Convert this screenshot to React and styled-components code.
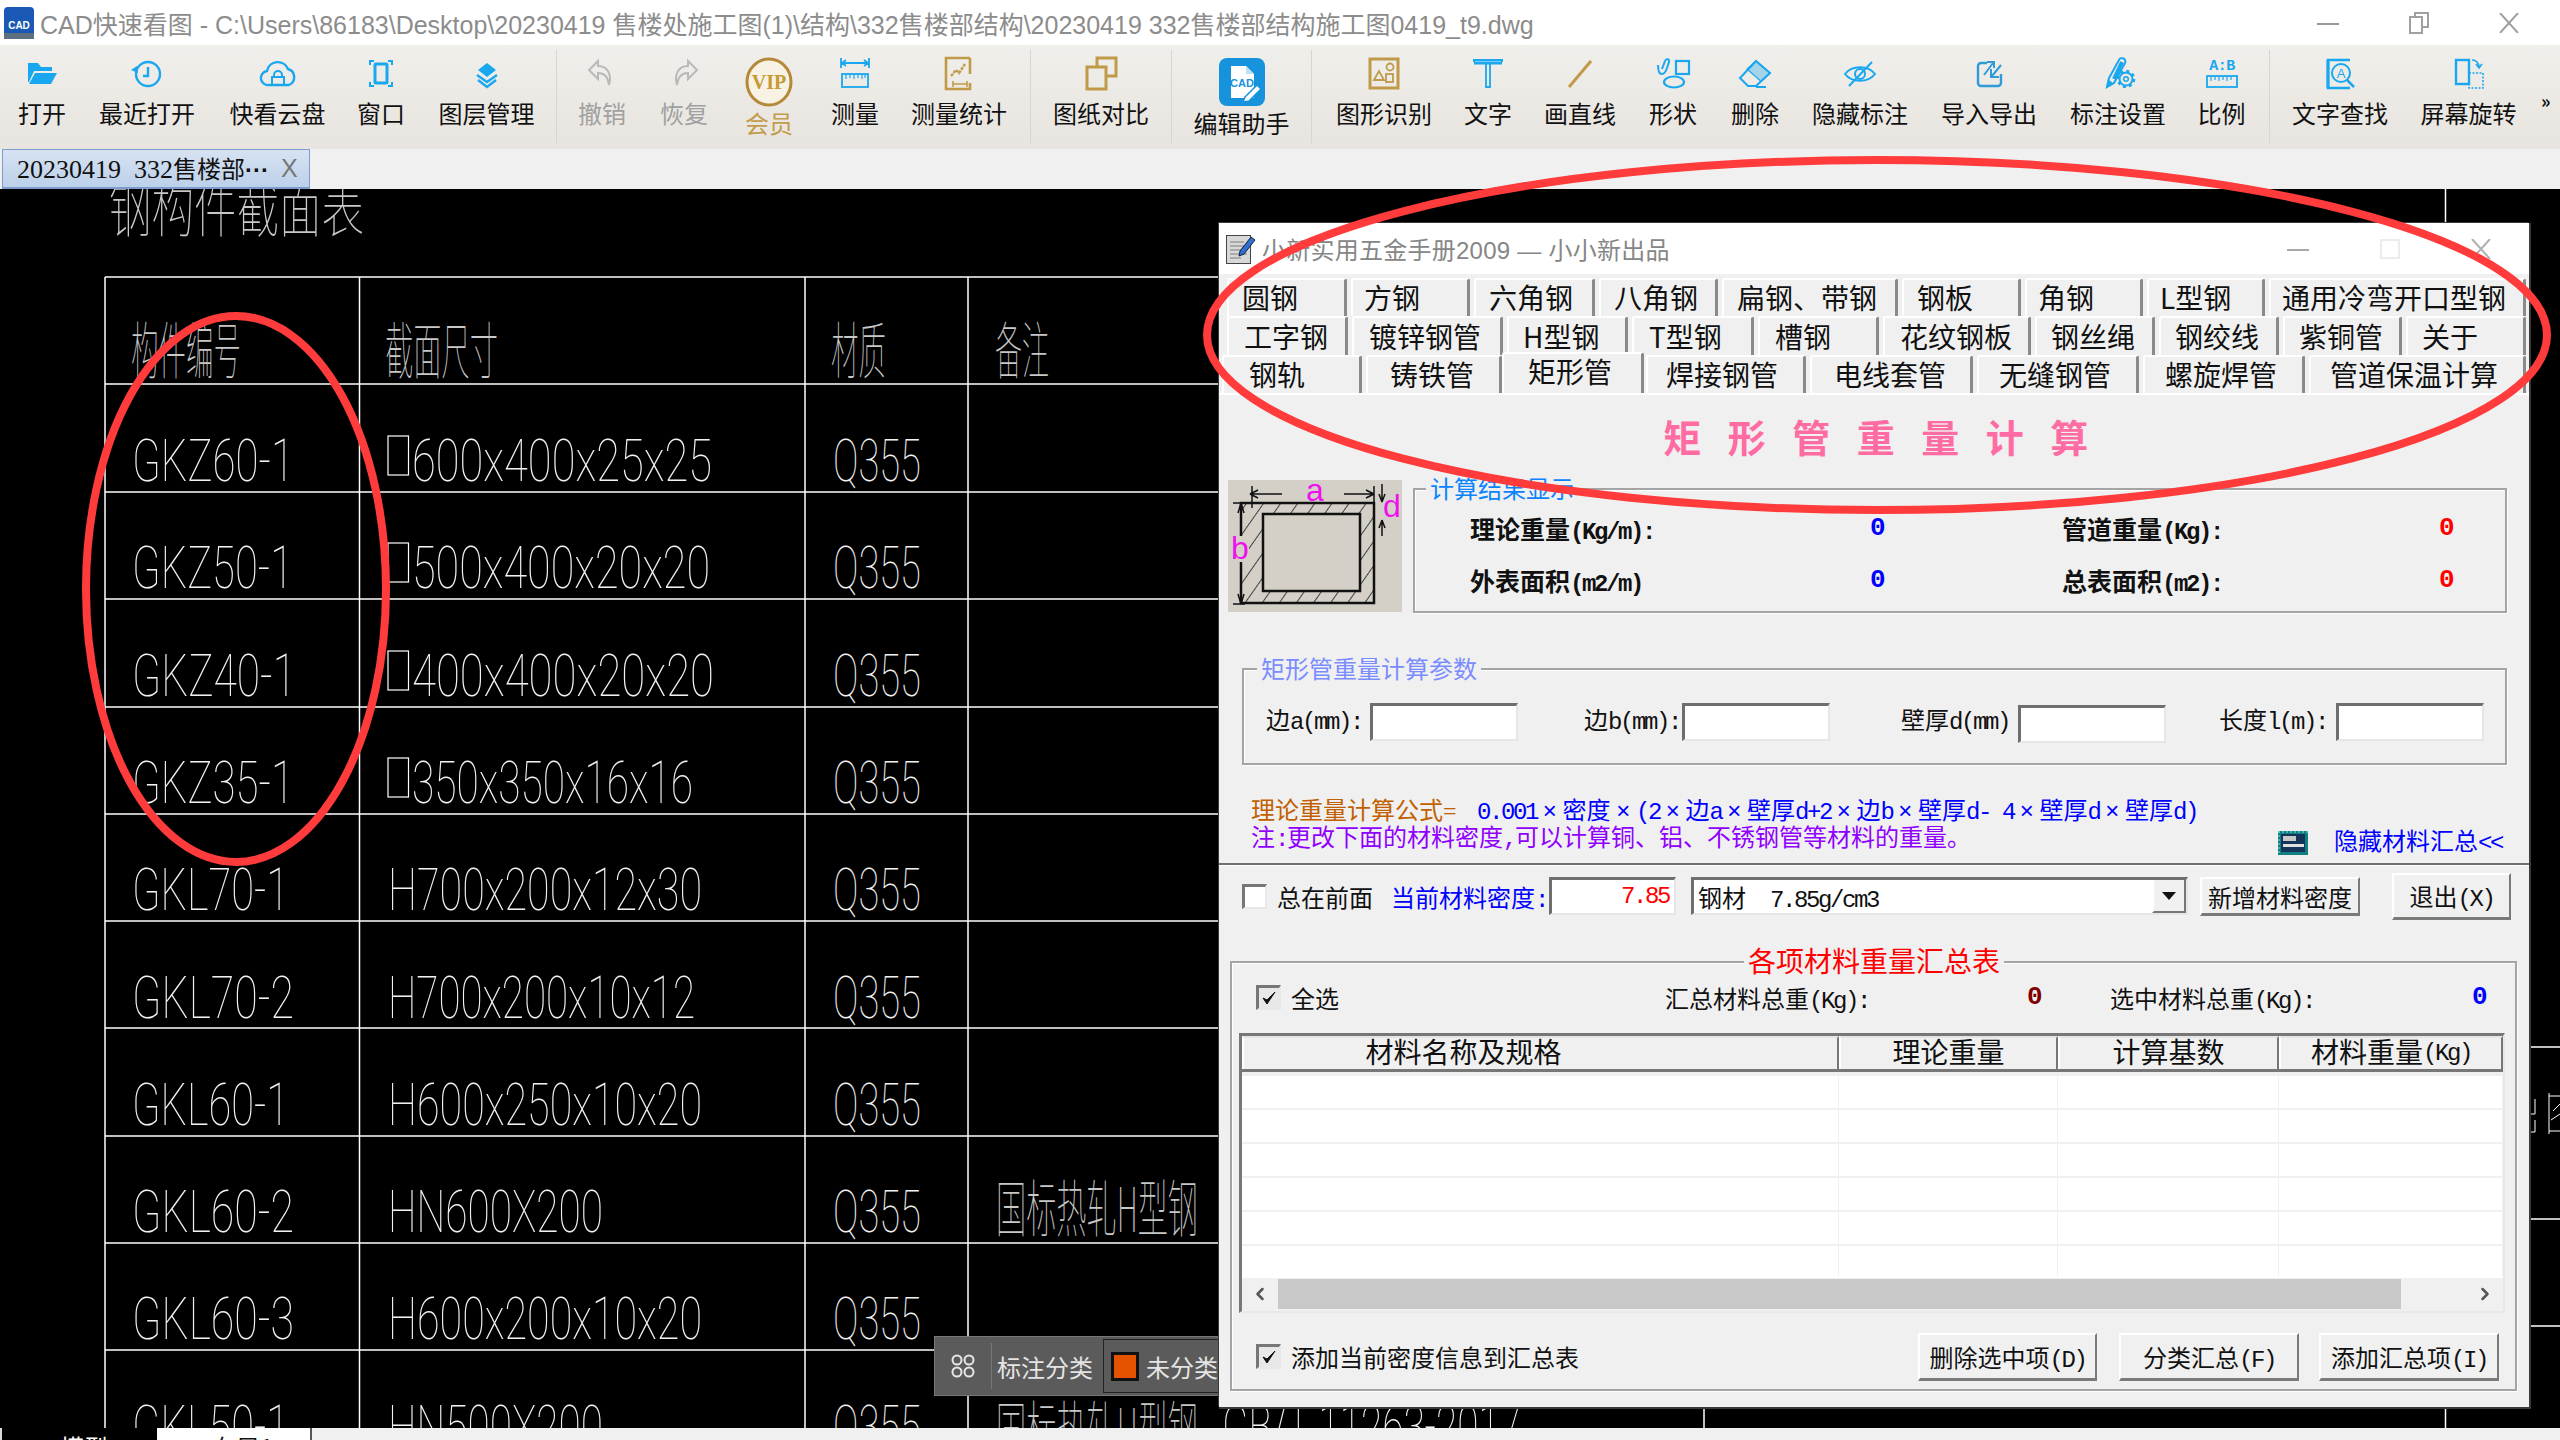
import React from "react";
import styled, { createGlobalStyle } from "styled-components";
import { ChevronLeft, ChevronRight } from "lucide-react";

const UI = `"Liberation Serif", "Noto Sans CJK SC", serif`;
const SANS = `"Noto Sans CJK SC", "Liberation Sans", sans-serif`;
const BLUE = "#19a7ef";
const GOLD = "#c09a48";
const GREY = "#b9b9b9";

const Global = createGlobalStyle`
  html, body { margin: 0; padding: 0; background: #000; }
  * { box-sizing: border-box; }
`;

const Page = styled.div`
  position: relative;
  width: 2560px;
  height: 1440px;
  overflow: hidden;
  display: flex;
  flex-direction: column;
  font-family: ${SANS};
  background: #000;
`;

/* half-width latin runs and full-width times signs of the old bitmap dialog font */
const Mono = styled.span`
  font-family: "Liberation Mono", monospace;
  font-size: 24px;
  letter-spacing: -2.4px;
`;
const Times = styled.span`
  display: inline-block;
  width: 25.5px;
  text-align: center;
  font-family: "Liberation Sans", sans-serif;
`;
const Mixed = ({ children }) =>
  String(children)
    .split(/([\x20-\x7e]+|×)/)
    .filter(Boolean)
    .map((part, i) =>
      part === "×" ? (
        <Times key={i}>×</Times>
      ) : /^[\x20-\x7e]+$/.test(part) ? (
        <Mono key={i}>{part}</Mono>
      ) : (
        <span key={i}>{part}</span>
      )
    );

/* ---------- main window chrome ---------- */
const TitleBar = styled.header`
  height: 45px;
  flex: none;
  background: #fff;
  display: flex;
  align-items: center;
  padding-left: 4px;
`;
const TitleText = styled.div`
  margin-left: 6px;
  font-family: "Liberation Sans", "Noto Sans CJK SC", sans-serif;
  font-size: 25px;
  color: #8c8c8c;
  white-space: nowrap;
`;
const WinButtons = styled.div`
  margin-left: auto;
  display: flex;
  align-items: center;
  padding-right: 41px;
  gap: 70px;
`;

const Ribbon = styled.nav`
  height: 104px;
  flex: none;
  display: flex;
  background: linear-gradient(#f0efeb, #e8e4df);
`;
const RibbonItem = styled.div`
  width: ${(p) => p.$w}px;
  flex: none;
  display: flex;
  flex-direction: column;
  align-items: center;
  padding-top: ${(p) => (p.$big ? 12 : 8)}px;
`;
const IconSlot = styled.div`
  height: ${(p) => (p.$big ? 50 : 40)}px;
  display: flex;
  align-items: center;
  justify-content: center;
`;
const RibbonLabel = styled.div`
  margin-top: ${(p) => (p.$big ? 1 : 5)}px;
  font-size: 24px;
  line-height: 30px;
  color: ${(p) => p.$color || "#111"};
  white-space: nowrap;
`;
const RibbonSep = styled.div`
  width: 1px;
  flex: none;
  height: 94px;
  margin: 5px 0 0 ${(p) => p.$ml || 0}px;
  background: #d8d6d2;
`;
const Overflow = styled.div`
  margin: 42px 0 0 14px;
  font-size: 18px;
  font-weight: 700;
  color: #111;
`;

const TabStrip = styled.div`
  height: 40px;
  flex: none;
  background: #f0f0f0;
  padding-left: 2px;
`;
const FileTab = styled.div`
  width: 308px;
  height: 40px;
  display: flex;
  align-items: center;
  padding-left: 14px;
  color: #111;
  background: linear-gradient(#d7e3f2, #bcd0ea);
  border: 1px solid #7c9ccb;
  border-bottom-width: 2px;
`;
const FileTabName = styled.div`
  width: 264px;
  flex: none;
  font-family: ${UI};
  font-size: 26px;
  line-height: 32px;
  white-space: pre;
`;
const FileTabCjk = styled.span`
  font-family: ${SANS};
  font-size: 24px;
`;
const FileTabDots = styled.span`
  font-family: "Liberation Sans", sans-serif;
  font-size: 24px;
  font-weight: 700;
`;
const FileTabClose = styled.span`
  color: #777;
  font-family: "Liberation Sans", sans-serif;
  font-size: 25px;
`;

const Workspace = styled.main`
  position: relative;
  flex: 1;
  background: #000;
  overflow: hidden;
`;
const CadSvg = styled.svg`
  display: block;
`;

const BottomTabs = styled.footer`
  height: 12px;
  flex: none;
  display: flex;
  background: #f0f0f0;
  overflow: hidden;
`;
const SheetTab = styled.div`
  width: ${(p) => p.$w}px;
  background: ${(p) => (p.$active ? "#fff" : "#000")};
  color: ${(p) => (p.$active ? "#111" : "#fff")};
  font-size: 24px;
  line-height: 24px;
  padding: 7px 0 0 ${(p) => p.$pl}px;
  border-left: 2px solid ${(p) => (p.$active ? "#fff" : "#d8d8d8")};
  border-right: ${(p) => (p.$active ? "2px solid #555" : "none")};
`;

/* ---------- floating category bar ---------- */
const CategoryBar = styled.div`
  position: absolute;
  left: 934px;
  top: 1147px;
  width: 300px;
  height: 60px;
  background: #5b5b5b;
  border: 1px solid #777;
  display: flex;
  align-items: center;
  color: #e4e4e4;
  font-size: 24px;
`;
const CategoryGrip = styled.div`
  width: 57px;
  height: 46px;
  display: flex;
  align-items: center;
  justify-content: center;
  border-right: 1px solid #777;
`;
const CategoryName = styled.div`
  margin-left: 5px;
  width: 106px;
`;
const CategoryCurrent = styled.div`
  display: flex;
  align-items: center;
  height: 54px;
  flex: 1;
  border: 1px solid #222;
  padding-left: 7px;
  gap: 7px;
`;
const Swatch = styled.div`
  width: 28px;
  height: 29px;
  background: #e55300;
  border: 3px solid #111;
`;

/* ---------- dialog ---------- */
const Dialog = styled.section`
  position: absolute;
  left: 1219px;
  top: 34px;
  width: 1310px;
  height: 1184px;
  background: #f0f0f0;
  box-shadow: 1px 1px 0 1px #3a3a3a, -1px -1px 0 0 #3a3a3a;
  font-family: ${UI};
  font-size: 24px;
  color: #111;
`;
const DialogTitle = styled.div`
  height: 51px;
  background: #fff;
  display: flex;
  align-items: center;
  padding-left: 7px;
`;
const DialogTitleText = styled.div`
  margin-left: 6px;
  font-family: "Liberation Sans", "Noto Sans CJK SC", sans-serif;
  font-size: 24px;
  letter-spacing: 0.25px;
  color: #868686;
  white-space: nowrap;
`;
const DialogButtons = styled.div`
  margin-left: auto;
  display: flex;
  align-items: center;
  padding-right: 38px;
  gap: 71px;
`;

const TabStack = styled.div`
  padding-top: 4px;
  border-bottom: 2px solid #fff;
  height: 121px;
`;
const TabRow = styled.div`
  height: ${(p) => p.$h}px;
  display: flex;
  gap: 4px;
  padding-left: ${(p) => p.$pl}px;
`;
const TabButton = styled.div`
  width: ${(p) => p.$w}px;
  flex: none;
  display: flex;
  align-items: center;
  white-space: nowrap;
  font-family: ${SANS};
  font-size: 28px;
  line-height: 1;
  padding: 0 0 2px ${(p) => p.$tx}px;
  background: #f0f0f0;
  border-top: 2px solid #fff;
  border-left: 2px solid #fff;
  border-right: 3px solid #8a8a8a;
  border-radius: 3px 3px 0 0;
  ${(p) =>
    p.$active &&
    `
    margin: -3px -2px 0 -4px;
    padding-bottom: 6px;
    position: relative;
    z-index: 1;
  `}
`;

const Heading = styled.h1`
  margin: 0;
  height: 85px;
  display: flex;
  justify-content: center;
  align-items: center;
  font-family: ${SANS};
  font-weight: 700;
  font-size: 38px;
  letter-spacing: 26.5px;
  padding: 0 0 5px 30px;
  color: #ff6ba3;
`;

const ResultArea = styled.div`
  display: flex;
  padding-left: 9px;
  height: 133px;
`;
const GroupBox = styled.div`
  position: relative;
  flex: none;
  width: ${(p) => p.$w}px;
  height: ${(p) => p.$h}px;
  margin-top: ${(p) => p.$mt || 0}px;
  margin-left: ${(p) => p.$ml || 0}px;
  border: 2px solid #a4a4a4;
  box-shadow: inset 1px 1px 0 #fff, 1px 1px 0 #fff;
`;
const Legend = styled.div`
  position: absolute;
  top: ${(p) => p.$top || -17}px;
  left: ${(p) => p.$left}px;
  padding: 0 ${(p) => p.$pad || 4}px;
  line-height: 30px;
  font-family: ${SANS};
  font-size: ${(p) => p.$size || 24}px;
  color: ${(p) => p.$color};
  background: #f0f0f0;
  white-space: nowrap;
`;
const ResultGrid = styled.div`
  display: grid;
  grid-template-columns: 400px 192px 377px 1fr;
  grid-auto-rows: 52px;
  padding: 12px 0 0 55px;
  align-items: center;
`;
const ResultLabel = styled.div`
  font-family: ${UI};
  font-weight: 700;
  font-size: 25px;
  white-space: nowrap;
`;
const ResultValue = styled.div`
  flex: none;
  width: ${(p) => (p.$w ? `${p.$w}px` : "auto")};
  margin-left: ${(p) => p.$ml || 0}px;
  font-family: "Liberation Mono", monospace;
  font-weight: 700;
  font-size: 26px;
  color: ${(p) => p.$color};
`;

const FieldRow = styled.div`
  display: flex;
  padding: 33px 0 0 22px;
`;
const Field = styled.label`
  display: flex;
  margin-left: ${(p) => p.$ml || 0}px;
`;
const FieldLabel = styled.span`
  width: ${(p) => p.$w}px;
  height: 37px;
  line-height: 37px;
  white-space: nowrap;
  font-family: ${UI};
  font-size: 24px;
`;
const Sunken = styled.div`
  width: ${(p) => p.$w}px;
  height: ${(p) => p.$h || 38}px;
  margin-left: ${(p) => p.$ml || 0}px;
  margin-top: ${(p) => p.$mt || 0}px;
  background: #fff;
  border-top: 3px solid #6e6e6e;
  border-left: 3px solid #6e6e6e;
  border-right: 2px solid #e6e6e6;
  border-bottom: 2px solid #e6e6e6;
  flex: none;
  display: flex;
  align-items: center;
  font-size: 22px;
`;

const FormulaLine = styled.div`
  margin-top: 28px;
  padding-left: 32px;
  display: flex;
  height: 30px;
  align-items: center;
  font-size: 24px;
  white-space: nowrap;
`;
const FormulaName = styled.span`
  color: #c06000;
  width: 226px;
  flex: none;
`;
const FormulaBody = styled.span`
  color: #0000ff;
`;
const NoteLine = styled.div`
  height: 40px;
  padding-left: 32px;
  display: flex;
  align-items: flex-start;
`;
const NoteText = styled.span`
  line-height: 30px;
  color: #9000ff;
  white-space: nowrap;
  font-size: 24px;
`;
const HideLink = styled.div`
  margin-left: auto;
  padding: 5px 27px 0 0;
  display: flex;
  gap: 26px;
  align-items: center;
  color: #0000ff;
  line-height: 28px;
  white-space: nowrap;
`;
const Divider = styled.div`
  height: 3px;
  border-top: 2px solid #707070;
  border-bottom: 1px solid #fff;
`;
const ToolRow = styled.div`
  height: 60px;
  display: flex;
  align-items: center;
  padding-left: 23px;
`;
const CheckBox = styled.span`
  width: 25px;
  height: 25px;
  flex: none;
  margin-left: ${(p) => p.$ml || 0}px;
  background: ${(p) => (p.$checked ? "#e8e8e8" : "#fff")};
  border-top: 3px solid #777;
  border-left: 3px solid #777;
  border-right: 2px solid #e8e8e8;
  border-bottom: 2px solid #e8e8e8;
  display: flex;
  align-items: center;
  justify-content: center;
`;
const Text = styled.span`
  width: ${(p) => p.$w}px;
  flex: none;
  margin-left: ${(p) => p.$ml || 0}px;
  color: ${(p) => p.$color || "#111"};
  white-space: nowrap;
`;
const DensityValue = styled.span`
  width: 100%;
  text-align: right;
  padding-right: 5px;
  color: #ff0000;
`;
const ComboText = styled.span`
  flex: 1;
  padding-left: 4px;
  white-space: pre;
  font-size: 24px;
`;
const ComboArrow = styled.span`
  width: 34px;
  height: 100%;
  background: #f0f0f0;
  border-left: 2px solid #fff;
  border-right: 2px solid #777;
  border-bottom: 2px solid #777;
  display: flex;
  align-items: center;
  justify-content: center;
  &::after {
    content: "";
    border-left: 7px solid transparent;
    border-right: 7px solid transparent;
    border-top: 8px solid #111;
  }
`;
const PushButton = styled.button`
  width: ${(p) => p.$w}px;
  height: ${(p) => p.$h}px;
  margin-left: ${(p) => p.$ml || 0}px;
  flex: none;
  padding: 0;
  background: #f0f0f0;
  font-family: ${UI};
  font-size: ${(p) => p.$size || 24}px;
  color: #111;
  border-top: 2px solid #fff;
  border-left: 2px solid #fff;
  border-right: 2px solid #7a7a7a;
  border-bottom: 3px solid #7a7a7a;
  white-space: nowrap;
`;
const TotalsRow = styled.div`
  height: 70px;
  display: flex;
  align-items: center;
  padding: 0 0 2px 24px;
`;
const TableFrame = styled.div`
  margin-left: 7px;
  width: 1266px;
  height: 280px;
  background: #f0f0f0;
  border-top: 3px solid #777;
  border-left: 3px solid #777;
  border-right: 2px solid #e8e8e8;
  border-bottom: 2px solid #e8e8e8;
  display: flex;
  flex-direction: column;
`;
const TableHead = styled.div`
  height: 36px;
  flex: none;
  display: grid;
  grid-template-columns: 597px 219px 221px 1fr;
  border-bottom: 3px solid #777;
`;
const HeadCell = styled.div`
  display: flex;
  align-items: center;
  justify-content: center;
  padding-right: ${(p) => p.$pr || 0}px;
  border-left: 2px solid #fff;
  border-top: 2px solid #e4e4e4;
  border-right: 2px solid #777;
  font-family: ${UI};
  font-size: 28px;
  line-height: 1;
  white-space: nowrap;
`;
const TableBody = styled.div`
  margin-top: 4px;
  background: #fff;
  flex: none;
`;
const TableRow = styled.div`
  height: ${(p) => p.$h}px;
  display: grid;
  grid-template-columns: 597px 219px 221px 1fr;
  border-bottom: 2px solid ${(p) => (p.$last ? "#fff" : "#f0f0f0")};
`;
const TableCell = styled.div`
  border-right: 1px solid #f0f0f0;
`;
const HScroll = styled.div`
  height: 30px;
  margin-top: 1px;
  display: flex;
  align-items: center;
  color: #555;
`;
const ScrollEnd = styled.div`
  width: 36px;
  flex: none;
  display: flex;
  justify-content: center;
`;
const ScrollThumb = styled.div`
  width: 1123px;
  height: 30px;
  background: #c8c8c8;
`;
const ScrollTrack = styled.div`
  flex: 1;
`;
const BottomRow = styled.div`
  height: 76px;
  padding: 11px 16px 0 24px;
  display: flex;
  align-items: center;
`;
const Spacer = styled.div`
  flex: 1;
`;
const DiagramSvg = styled.svg`
  flex: none;
`;

/* ---------- annotation overlay ---------- */
const Overlay = styled.svg`
  position: absolute;
  inset: 0;
  pointer-events: none;
`;

/* ---------- icons ---------- */
const Ic = ({ children, color = BLUE, w = 40, h = 40 }) => (
  <svg width={w} height={h} viewBox="0 0 40 40" fill="none" stroke={color} strokeWidth="2.4">
    {children}
  </svg>
);
const icons = {
  open: (
    <Ic>
      <g fill={BLUE} stroke="none">
        <path d="M6 10h10l3 4h11v4H12L7 29H6z" />
        <path d="M13 20h22l-6 11H7z" />
      </g>
    </Ic>
  ),
  recent: (
    <Ic>
      <circle cx="21" cy="21" r="12" />
      <path d="M21 14v9h-5" />
      <path d="M4 17l6-4 1 7z" fill={BLUE} stroke="none" />
    </Ic>
  ),
  cloud: (
    <Ic>
      <path d="M11 32a7 7 0 0 1-2-14 11 11 0 0 1 21-2 8.500 8.500 0 0 1 1 16z" />
      <rect x="14" y="24" width="12" height="8" strokeWidth="2" />
      <path d="M16 24v-2a4 4 0 0 1 8 0v2" strokeWidth="2" />
    </Ic>
  ),
  window: (
    <Ic>
      <rect x="14" y="11" width="12" height="19" rx="1" strokeWidth="3" />
      <path d="M9 12V8h4M27 8h4v4M31 29v4h-4M13 33H9v-4" strokeWidth="2" />
    </Ic>
  ),
  layers: (
    <Ic>
      <path d="M20 10l9 7-9 7-9-7z" fill={BLUE} stroke="none" />
      <path d="M10 22l10 7 10-7M11 27l9 7 9-7" />
    </Ic>
  ),
  undo: (
    <Ic color={GREY}>
      <path d="M16 8L7 17l9 9v-6c6 0 10 3 11 12 3-10-1-19-11-19z" strokeWidth="2" />
    </Ic>
  ),
  redo: (
    <Ic color={GREY}>
      <path d="M24 8l9 9-9 9v-6c-6 0-10 3-11 12-3-10 1-19 11-19z" strokeWidth="2" />
    </Ic>
  ),
  vip: (
    <svg width="48" height="50" viewBox="0 0 48 50">
      <ellipse cx="24" cy="25" rx="22" ry="23" fill="#f7f2e4" stroke="#b5893a" strokeWidth="3" />
      <text x="24" y="32" textAnchor="middle" fontFamily="Liberation Serif" fontWeight="700" fontSize="20" fill="#c79a35">
        VIP
      </text>
    </svg>
  ),
  measure: (
    <Ic>
      <path d="M7 10h26M11 7l-4 3 4 3M29 7l4 3-4 3M6 5v10M34 5v10" strokeWidth="1.8" />
      <rect x="7" y="21" width="26" height="13" strokeWidth="1.8" />
      <path d="M11 21v5M15 21v4M19 21v5M23 21v4M27 21v5M30 21v4" strokeWidth="1.2" />
    </Ic>
  ),
  stats: (
    <Ic color={GOLD}>
      <path d="M31 5H7v31h24V30" strokeWidth="2.6" />
      <path d="M12 23l5-6 3 3 6-9" strokeWidth="2.4" strokeDasharray="3 1" />
      <path d="M14 31h14M14 28v6M28 28v6" strokeWidth="1.6" />
      <path d="M31 5v16" strokeWidth="2.6" />
    </Ic>
  ),
  compare: (
    <Ic color={GOLD}>
      <rect x="16" y="5" width="19" height="18" strokeWidth="3" />
      <rect x="6" y="14" width="19" height="22" strokeWidth="3" fill="#ecebe6" />
    </Ic>
  ),
  assist: (
    <svg width="48" height="50" viewBox="0 0 48 50">
      <rect x="1" y="1" width="46" height="48" rx="8" fill="#1792dc" />
      <path d="M13 9h15l8 8v24H13z" fill="#fff" />
      <path d="M28 9v8h8" fill="#bfe0f5" />
      <text x="24" y="30" textAnchor="middle" fontFamily="Liberation Sans" fontWeight="700" fontSize="11" fill="#1792dc">
        CAD
      </text>
      <path d="M27 40l12-12 4 4-12 12-6 1z" fill="#fff" stroke="#1792dc" strokeWidth="1.5" />
    </svg>
  ),
  shapeRec: (
    <Ic color={GOLD}>
      <rect x="6" y="6" width="28" height="29" strokeWidth="3" />
      <path d="M10 27l5-9 5 9z" strokeWidth="1.8" />
      <circle cx="26" cy="14" r="3.500" strokeWidth="1.8" />
      <rect x="22" y="21" width="7" height="8" strokeWidth="1.8" />
    </Ic>
  ),
  text: (
    <Ic>
      <path d="M6 9V7h28v2" strokeWidth="2" />
      <path d="M6 10h28" strokeWidth="3" />
      <path d="M18 10v24h4V10" strokeWidth="1.8" />
    </Ic>
  ),
  line: (
    <Ic color={GOLD}>
      <path d="M9 34L31 8" strokeWidth="3" />
    </Ic>
  ),
  shape: (
    <Ic>
      <rect x="23" y="8" width="13" height="13" strokeWidth="2.200" />
      <ellipse cx="21" cy="29" rx="10" ry="5.500" strokeWidth="2.200" />
      <path d="M5 12c0 5 1 9 4 9s4-3 5-6l2-6c1-3-3-4-4-1l-3 8" strokeWidth="2" />
    </Ic>
  ),
  erase: (
    <Ic>
      <path d="M21 8l14 12-14 13h-8l-8-8z" strokeWidth="2" />
      <path d="M21 8l14 12-9 8.500L12 16z" fill={BLUE} fillOpacity=".35" strokeWidth="1.2" />
      <path d="M21 34h10" strokeWidth="2" />
    </Ic>
  ),
  eye: (
    <Ic>
      <path d="M5 21c7-9 23-9 30 0-7 9-23 9-30 0z" strokeWidth="2" />
      <circle cx="20" cy="21" r="5" strokeWidth="2" />
      <path d="M9 33L32 9" strokeWidth="2" />
    </Ic>
  ),
  export: (
    <Ic color="#2f9bd8">
      <path d="M18 10h-6a3 3 0 0 0-3 3v17a3 3 0 0 0 3 3h17a3 3 0 0 0 3-3v-9" strokeWidth="2.400" />
      <path d="M15 22l9-12M18 9h7v6M32 12l-9 11M22 16v8h8" strokeWidth="2" />
    </Ic>
  ),
  markSet: (
    <Ic>
      <path d="M9 34l2-9L21 7a3 3 0 0 1 6 3L16 30z" strokeWidth="2" />
      <path d="M8 35l2-9 5 4z" fill={BLUE} stroke="none" />
      <path d="M24 9l-8 17" strokeWidth="4" />
      <circle cx="28" cy="26" r="6.500" strokeWidth="2" fill="#ebe9e4" />
      <circle cx="28" cy="26" r="8" strokeWidth="2.500" strokeDasharray="3 3.300" />
      <circle cx="28" cy="26" r="2.300" strokeWidth="1.500" />
    </Ic>
  ),
  ratio: (
    <Ic>
      <text x="20" y="17" textAnchor="middle" fontFamily="Liberation Mono" fontWeight="700" fontSize="15" fill={BLUE} stroke="none" letterSpacing="-.5">
        A:B
      </text>
      <rect x="5" y="23" width="30" height="11" strokeWidth="1.800" />
      <path d="M9 23v5M13 23v4M17 23v5M21 23v4M25 23v5M29 23v4" strokeWidth="1.200" />
    </Ic>
  ),
  find: (
    <Ic>
      <path d="M30 7H8v28h22" strokeWidth="2.600" />
      <path d="M8 7v28" strokeWidth="3" />
      <circle cx="21" cy="20" r="9" strokeWidth="2" />
      <path d="M27 27l7 7" strokeWidth="2.500" />
      <text x="21" y="25" textAnchor="middle" fontFamily="Liberation Sans" fontSize="13" fill={BLUE} stroke="none">
        A
      </text>
    </Ic>
  ),
  rotate: (
    <Ic>
      <rect x="7" y="7" width="13" height="24" strokeWidth="2.400" />
      <path d="M20 20h14v15H20v-4" strokeWidth="1.600" strokeDasharray="2 1.500" />
      <path d="M23 7c4 0 7 3 7 7M27 11l3 4 3-4" strokeWidth="1.600" />
    </Ic>
  ),
};

const WinMin = ({ color = "#999", w = 22 }) => (
  <svg width={w} height="20" viewBox="0 0 22 20">
    <path d="M0 11h22" stroke={color} strokeWidth="2" />
  </svg>
);
const WinRestore = () => (
  <svg width="20" height="22" viewBox="0 0 20 22" fill="none" stroke="#a0a0a0" strokeWidth="2">
    <path d="M6 4V1h13v14h-5" />
    <rect x="1" y="5" width="12" height="16" />
  </svg>
);
const WinMax = () => (
  <svg width="20" height="20" viewBox="0 0 20 20" fill="none" stroke="#ececec" strokeWidth="2">
    <rect x="1" y="1" width="18" height="18" />
  </svg>
);
const WinClose = ({ color = "#a0a0a0" }) => (
  <svg width="20" height="20" viewBox="0 0 20 20" stroke={color} strokeWidth="2">
    <path d="M1 0l18 20M19 0L1 20" />
  </svg>
);
const AppLogo = () => (
  <svg width="30" height="32" viewBox="0 0 30 32">
    <rect width="30" height="32" rx="4" fill="#1a58b5" />
    <rect x="0" y="26" width="30" height="6" fill="#5e7080" />
    <text x="15" y="22" textAnchor="middle" fontFamily="Liberation Sans" fontWeight="700" fontSize="10" fill="#fff">
      CAD
    </text>
  </svg>
);
const NoteIcon = () => (
  <svg width="30" height="30" viewBox="0 0 30 30">
    <rect x="0.500" y="1.500" width="24" height="28" fill="#d8d8d8" stroke="#444" />
    <path d="M4 8h14M4 12h17M4 16h15M4 20h17M4 24h11" stroke="#9a9a9a" strokeWidth="1.500" />
    <path d="M14 17L25 3l4 3-11 14-5 2z" fill="#2f6fd0" stroke="#123" strokeWidth="1" />
  </svg>
);
const SmallCheck = () => (
  <svg width="16" height="16" viewBox="0 0 16 16">
    <path d="M2 8l4 6 8-12-8 8z" fill="#111" stroke="#111" />
  </svg>
);
const CalcIcon = () => (
  <svg width="30" height="24" viewBox="0 0 30 24">
    <rect width="30" height="24" fill="#0f7f80" />
    <rect x="3" y="3" width="24" height="18" fill="#14345a" />
    <rect x="5" y="5" width="13" height="5" fill="#c8c8c8" />
    <rect x="5" y="13" width="21" height="3" fill="#e0e0e0" />
    <path d="M0 1h30M1 0v24" stroke="#7fe0e0" strokeWidth="1" strokeDasharray="2 2" />
  </svg>
);
const GripIcon = () => (
  <svg width="26" height="28" viewBox="0 0 26 28" fill="none" stroke="#e6e6e6" strokeWidth="2">
    <circle cx="7" cy="8" r="4.500" />
    <circle cx="19" cy="8" r="4.500" />
    <circle cx="7" cy="20" r="4.500" />
    <circle cx="19" cy="20" r="4.500" />
  </svg>
);
const PipeDiagram = () => (
  <DiagramSvg width="174" height="132" viewBox="0 0 174 132">
    <defs>
      <pattern id="hatch" width="14" height="14" patternUnits="userSpaceOnUse" patternTransform="rotate(35)">
        <path d="M0 0v14" stroke="#111" strokeWidth="1.500" />
      </pattern>
    </defs>
    <rect width="174" height="132" fill="#d4d0c8" />
    <path d="M13 23h133v100H13zM35 34v77h97V34z" fill="url(#hatch)" fillRule="evenodd" />
    <rect x="13" y="23" width="133" height="100" fill="none" stroke="#111" strokeWidth="2.500" />
    <rect x="35" y="34" width="97" height="77" fill="#d4d0c8" stroke="#111" strokeWidth="2.500" />
    <g stroke="#111" strokeWidth="1.500" fill="none">
      <path d="M22 14h32M22 14l8-4M22 14l8 4M116 14h30M146 14l-8-4M146 14l-8 4M24 6v22M146 6v18" />
      <path d="M13 23l0 30M13 23l-3 10M13 23l3 10M13 88l0 36M13 124l-3-10M13 124l3-10M5 23h12M5 124h12" />
      <path d="M154 4v18M154 22l-3-8M154 22l3-8M154 40v16M154 40l-3 8M154 40l3 8" />
    </g>
    <g fontFamily="Liberation Sans" fill="#ee11ee">
      <text x="78" y="21" fontSize="32">a</text>
      <rect x="1" y="56" width="20" height="26" fill="#d4d0c8" />
      <text x="3" y="79" fontSize="32">b</text>
      <text x="155" y="37" fontSize="32">d</text>
    </g>
  </DiagramSvg>
);

/* ---------- data ---------- */
const ribbon = [
  { k: "open", t: "打开", w: 84 },
  { k: "recent", t: "最近打开", w: 126 },
  { k: "cloud", t: "快看云盘", w: 135 },
  { k: "window", t: "窗口", w: 72 },
  { k: "layers", t: "图层管理", w: 139 },
  { sep: 0 },
  { k: "undo", t: "撤销", w: 90, c: "#a0a0a0" },
  { k: "redo", t: "恢复", w: 74, c: "#a0a0a0" },
  { k: "vip", t: "会员", w: 96, c: "#c29b4c", big: true },
  { k: "measure", t: "测量", w: 76 },
  { k: "stats", t: "测量统计", w: 132 },
  { sep: 5 },
  { k: "compare", t: "图纸对比", w: 140 },
  { sep: 0 },
  { k: "assist", t: "编辑助手", w: 139, big: true },
  { sep: 0 },
  { k: "shapeRec", t: "图形识别", w: 144 },
  { k: "text", t: "文字", w: 64 },
  { k: "line", t: "画直线", w: 120 },
  { k: "shape", t: "形状", w: 66 },
  { k: "erase", t: "删除", w: 98 },
  { k: "eye", t: "隐藏标注", w: 112 },
  { k: "export", t: "导入导出", w: 146 },
  { k: "markSet", t: "标注设置", w: 112 },
  { k: "ratio", t: "比例", w: 95 },
  { sep: 0 },
  { k: "find", t: "文字查找", w: 140 },
  { k: "rotate", t: "屏幕旋转", w: 117 },
];

const tabRows = [
  {
    h: 38,
    pl: 8,
    tabs: [["圆钢", 120, 13], ["方钢", 119, 11], ["六角钢", 121, 13], ["八角钢", 119, 13], ["扁钢、带钢", 176, 13], ["钢板", 119, 13], ["角钢", 118, 11], ["L型钢", 118, 11], ["通用冷弯开口型钢", 257, 11]],
  },
  {
    h: 39,
    pl: 8,
    tabs: [["工字钢", 121, 15], ["镀锌钢管", 151, 15], ["H型钢", 121, 14], ["T型钢", 122, 15], ["槽钢", 121, 15], ["花纹钢板", 148, 15], ["钢丝绳", 120, 14], ["钢绞线", 120, 14], ["紫铜管", 119, 14], ["关于", 120, 14]],
  },
  {
    h: 38,
    pl: 3,
    tabs: [["钢轨", 140, 25], ["铸铁管", 136, 22], ["矩形管", 142, 24, true], ["焊接钢管", 160, 18], ["电线套管", 163, 22], ["无缝钢管", 162, 20], ["螺旋焊管", 162, 20], ["管道保温计算", 217, 19]],
  },
];

const rowY = [277, 384, 492, 599, 707, 814, 921, 1028, 1136, 1243, 1350];
const baseY = (i) => 481 + Math.round(107.3 * i);
const cadRows = [
  ["GKZ60-1", 162, "600x400x25x25", 300, 412],
  ["GKZ50-1", 161, "500x400x20x20", 298, 412],
  ["GKZ40-1", 164, "400x400x20x20", 302, 412],
  ["GKZ35-1", 162, "350x350x16x16", 281, 412],
  ["GKL70-1", 157, "H700x200x12x30", 314, 388],
  ["GKL70-2", 162, "H700x200x10x12", 307, 388],
  ["GKL60-1", 157, "H600x250x10x20", 314, 388],
  ["GKL60-2", 162, "HN600X200", 215, 388],
  ["GKL60-3", 162, "H600x200x10x20", 314, 388],
  ["GKL50-1", 157, "HN500X200", 215, 388],
];

const CadLabel = ({ x, y, w, size = 60, cjk, children }) => (
  <text
    x={x}
    y={y}
    fontFamily={cjk ? "Noto Sans CJK SC" : "Roboto, Lato, sans-serif"}
    fontWeight="100"
    fontSize={size}
    fill={cjk ? "#c8c8c8" : "#f2f2f2"}
    textLength={w}
    lengthAdjust="spacingAndGlyphs"
  >
    {children}
  </text>
);

const CadDrawing = () => (
  <CadSvg width="2560" height="1239" viewBox="0 189 2560 1239">
    <g stroke="#fff" strokeWidth="1.500">
      {rowY.map((y) => (
        <path key={y} d={`M105 ${y}H2446`} />
      ))}
      <path d="M105 277V1428M359.500 277V1428M805 277V1428M968 277V1428M1704 277V1428M2445.500 189V1428" />
      <path d="M2529 1047H2560M2529 1219H2560M2529 1326H2560" />
      <path d="M2529 1114H2535V1099M2529 1132H2535V1120M2549 1093V1134M2549 1096H2560M2549 1131H2560M2553 1111L2560 1104M2551 1120L2560 1114" strokeWidth="1" />
    </g>
    <CadLabel x={109} y={232} w={255} size={62} cjk>钢构件截面表</CadLabel>
    <CadLabel x={131} y={374} w={110} size={62} cjk>构件编号</CadLabel>
    <CadLabel x={385} y={374} w={113} size={62} cjk>截面尺寸</CadLabel>
    <CadLabel x={831} y={374} w={55} size={62} cjk>材质</CadLabel>
    <CadLabel x={995} y={374} w={54} size={62} cjk>备注</CadLabel>
    {cadRows.map((r, i) => (
      <g key={r[0]}>
        <CadLabel x={132} y={baseY(i)} w={r[1]}>{r[0]}</CadLabel>
        <CadLabel x={r[4]} y={baseY(i)} w={r[3]}>{r[2]}</CadLabel>
        <CadLabel x={833} y={baseY(i)} w={88}>Q355</CadLabel>
        {i < 4 && (
          <rect x="388" y={baseY(i) - 45} width="20.500" height="39" fill="none" stroke="#fff" strokeWidth="1.200" />
        )}
      </g>
    ))}
    <CadLabel x={996} y={1232} w={202} size={62} cjk>国标热轧H型钢</CadLabel>
    <CadLabel x={996} y={1453} w={202} size={62} cjk>国标热轧H型钢</CadLabel>
    <CadLabel x={1222} y={1447} w={299}>GB/T 11263-2017</CadLabel>
  </CadSvg>
);

/* ---------- page ---------- */
export default function App() {
  return (
    <Page>
      <Global />
      <TitleBar>
        <AppLogo />
        <TitleText>
          CAD快速看图 - C:\Users\86183\Desktop\20230419 售楼处施工图(1)\结构\332售楼部结构\20230419 332售楼部结构施工图0419_t9.dwg
        </TitleText>
        <WinButtons>
          <WinMin />
          <WinRestore />
          <WinClose />
        </WinButtons>
      </TitleBar>

      <Ribbon>
        {ribbon.map((it, i) =>
          it.k ? (
            <RibbonItem key={it.k} $w={it.w} $big={it.big}>
              <IconSlot $big={it.big}>{icons[it.k]}</IconSlot>
              <RibbonLabel $color={it.c} $big={it.big}>{it.t}</RibbonLabel>
            </RibbonItem>
          ) : (
            <RibbonSep key={i} $ml={it.sep} />
          )
        )}
        <Overflow>»</Overflow>
      </Ribbon>

      <TabStrip>
        <FileTab>
          <FileTabName>
            20230419  332<FileTabCjk>售楼部</FileTabCjk><FileTabDots>···</FileTabDots>
          </FileTabName>
          <FileTabClose>X</FileTabClose>
        </FileTab>
      </TabStrip>

      <Workspace>
        <CadDrawing />
        <CategoryBar>
          <CategoryGrip>
            <GripIcon />
          </CategoryGrip>
          <CategoryName>标注分类</CategoryName>
          <CategoryCurrent>
            <Swatch />
            未分类
          </CategoryCurrent>
        </CategoryBar>

        <Dialog>
          <DialogTitle>
            <NoteIcon />
            <DialogTitleText>小新实用五金手册2009 — 小小新出品</DialogTitleText>
            <DialogButtons>
              <WinMin color="#a8a8a8" />
              <WinMax />
              <WinClose color="#b0b0b0" />
            </DialogButtons>
          </DialogTitle>

          <TabStack>
            {tabRows.map((row, r) => (
              <TabRow key={r} $h={row.h} $pl={row.pl}>
                {row.tabs.map(([t, w, tx, a]) => (
                  <TabButton key={t} $w={w} $tx={tx} $active={a}>
                    {t}
                  </TabButton>
                ))}
              </TabRow>
            ))}
          </TabStack>

          <Heading>矩形管重量计算</Heading>

          <ResultArea>
            <PipeDiagram />
            <GroupBox $w={1094} $h={125} $mt={8} $ml={11}>
              <Legend $left={11} $color="#0a84ff">计算结果显示</Legend>
              <ResultGrid>
                <ResultLabel><Mixed>理论重量(Kg/m):</Mixed></ResultLabel>
                <ResultValue $color="#0000ff">0</ResultValue>
                <ResultLabel><Mixed>管道重量(Kg):</Mixed></ResultLabel>
                <ResultValue $color="#ff0000">0</ResultValue>
                <ResultLabel><Mixed>外表面积(m2/m)</Mixed></ResultLabel>
                <ResultValue $color="#0000ff">0</ResultValue>
                <ResultLabel><Mixed>总表面积(m2):</Mixed></ResultLabel>
                <ResultValue $color="#ff0000">0</ResultValue>
              </ResultGrid>
            </GroupBox>
          </ResultArea>

          <GroupBox $w={1265} $h={97} $mt={55} $ml={23}>
            <Legend $left={13} $color="#7a8cff">矩形管重量计算参数</Legend>
            <FieldRow>
              <Field>
                <FieldLabel $w={104}><Mixed>边a(mm):</Mixed></FieldLabel>
                <Sunken $w={148} />
              </Field>
              <Field $ml={66}>
                <FieldLabel $w={98}><Mixed>边b(mm):</Mixed></FieldLabel>
                <Sunken $w={148} />
              </Field>
              <Field $ml={71}>
                <FieldLabel $w={117}><Mixed>壁厚d(mm)</Mixed></FieldLabel>
                <Sunken $w={148} $mt={2} />
              </Field>
              <Field $ml={53}>
                <FieldLabel $w={117}><Mixed>长度l(m):</Mixed></FieldLabel>
                <Sunken $w={148} />
              </Field>
            </FieldRow>
          </GroupBox>

          <FormulaLine>
            <FormulaName>理论重量计算公式=</FormulaName>
            <FormulaBody>
              <Mixed>0.001×密度×(2×边a×壁厚d+2×边b×壁厚d- 4×壁厚d×壁厚d)</Mixed>
            </FormulaBody>
          </FormulaLine>
          <NoteLine>
            <NoteText><Mixed>注:更改下面的材料密度,可以计算铜、铝、不锈钢管等材料的重量。</Mixed></NoteText>
            <HideLink>
              <CalcIcon />
              <span><Mixed>隐藏材料汇总&lt;&lt;</Mixed></span>
            </HideLink>
          </NoteLine>
          <Divider />

          <ToolRow>
            <CheckBox />
            <Text $w={96} $ml={10}>总在前面</Text>
            <Text $w={150} $ml={18} $color="#0000ff"><Mixed>当前材料密度:</Mixed></Text>
            <Sunken $w={127} $ml={8}>
              <DensityValue><Mono>7.85</Mono></DensityValue>
            </Sunken>
            <Sunken $w={497} $ml={15}>
              <ComboText><Mixed>钢材  7.85g/cm3</Mixed></ComboText>
              <ComboArrow />
            </Sunken>
            <PushButton $w={160} $h={39} $ml={12}>新增材料密度</PushButton>
            <PushButton $w={119} $h={47} $ml={32}><Mixed>退出(X)</Mixed></PushButton>
          </ToolRow>

          <GroupBox $w={1287} $h={430} $mt={35} $ml={11}>
            <Legend $left={512} $top={-18} $size={28} $color="#ff0000">各项材料重量汇总表</Legend>
            <TotalsRow>
              <CheckBox $checked>
                <SmallCheck />
              </CheckBox>
              <Text $w={48} $ml={10}>全选</Text>
              <Text $w={201} $ml={326}><Mixed>汇总材料总重(Kg):</Mixed></Text>
              <ResultValue $w={16} $ml={161} $color="#800000">0</ResultValue>
              <Text $w={200} $ml={67}><Mixed>选中材料总重(Kg):</Mixed></Text>
              <ResultValue $w={16} $ml={162} $color="#0000ff">0</ResultValue>
            </TotalsRow>
            <TableFrame>
              <TableHead>
                <HeadCell $pr={154}>材料名称及规格</HeadCell>
                <HeadCell>理论重量</HeadCell>
                <HeadCell>计算基数</HeadCell>
                <HeadCell><Mixed>材料重量(Kg)</Mixed></HeadCell>
              </TableHead>
              <TableBody>
                {[34, 34, 34, 34, 34, 32].map((h, i) => (
                  <TableRow key={i} $h={h} $last={i === 5}>
                    <TableCell />
                    <TableCell />
                    <TableCell />
                    <TableCell />
                  </TableRow>
                ))}
              </TableBody>
              <HScroll>
                <ScrollEnd>
                  <ChevronLeft size={20} strokeWidth={3} />
                </ScrollEnd>
                <ScrollThumb />
                <ScrollTrack />
                <ScrollEnd>
                  <ChevronRight size={20} strokeWidth={3} />
                </ScrollEnd>
              </HScroll>
            </TableFrame>
            <BottomRow>
              <CheckBox $checked>
                <SmallCheck />
              </CheckBox>
              <Text $w={290} $ml={10}>添加当前密度信息到汇总表</Text>
              <Spacer />
              <PushButton $w={179} $h={48}><Mixed>删除选中项(D)</Mixed></PushButton>
              <PushButton $w={180} $h={48} $ml={22}><Mixed>分类汇总(F)</Mixed></PushButton>
              <PushButton $w={180} $h={48} $ml={20}><Mixed>添加汇总项(I)</Mixed></PushButton>
            </BottomRow>
          </GroupBox>
        </Dialog>
      </Workspace>

      <BottomTabs>
        <SheetTab $w={157} $pl={58}>模型</SheetTab>
        <SheetTab $w={155} $pl={53} $active>布局1</SheetTab>
      </BottomTabs>

      <Overlay width="2560" height="1440" fill="none" stroke="#ff3b3b">
        <ellipse cx="236" cy="589" rx="150" ry="273" strokeWidth="8" />
        <ellipse cx="1877" cy="335" rx="670" ry="175" strokeWidth="8" />
      </Overlay>
    </Page>
  );
}
